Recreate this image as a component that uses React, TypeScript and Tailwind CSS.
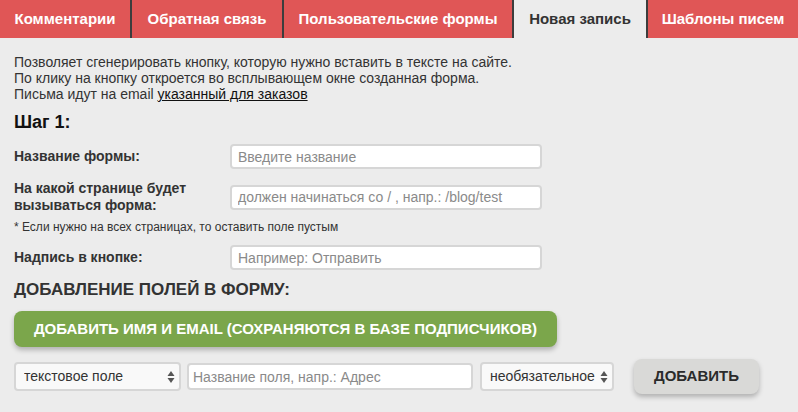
import React, { useState } from 'react';

const tabs = [
  { label: 'Комментарии', width: 'w-[130px]' },
  { label: 'Обратная связь', width: 'w-[152px]' },
  { label: 'Пользовательские формы', width: 'w-[230px]' },
  { label: 'Новая запись', width: 'w-[134px]' },
  { label: 'Шаблоны писем', width: 'flex-1' },
];

function SelectArrows() {
  return (
    <svg width="8" height="13" viewBox="0 0 8 13" className="pointer-events-none absolute right-[6px] top-1/2 -translate-y-1/2">
      <path d="M4 0.5 L7.5 5.5 L0.5 5.5 Z" fill="#555" />
      <path d="M4 12.5 L7.5 7.5 L0.5 7.5 Z" fill="#555" />
    </svg>
  );
}

function FieldRow({ label, placeholder }: { label: React.ReactNode; placeholder: string }) {
  return (
    <div className="flex items-center">
      <label className="w-[216px] text-[14px] font-bold leading-[17px] text-[#333]">{label}</label>
      <input
        placeholder={placeholder}
        className="w-[312px] h-[25px] px-[6px] bg-white border-2 border-[#d6d6d6] rounded-[4px] text-[14px] text-[#333] placeholder:text-[#8a8a8a] outline-none"
      />
    </div>
  );
}

export default function App() {
  const [active, setActive] = useState(3);
  const [fieldType, setFieldType] = useState('text');
  const [required, setRequired] = useState('optional');

  return (
    <div className="w-[798px] h-[412px] bg-[#ececec] overflow-hidden" style={{ fontFamily: '"Liberation Sans", Arial, sans-serif' }}>
      {/* Tabs */}
      <div className="flex h-[38px]">
        {tabs.map((t, i) => (
          <button
            key={t.label}
            onClick={() => setActive(i)}
            className={`${t.width} h-full flex items-center justify-center text-[15px] font-bold ${
              i > 0 ? 'border-l-2 border-[#3d3d3d]' : ''
            } ${active === i ? 'bg-[#ececec] text-[#333]' : 'bg-[#e05656] text-white'}`}
          >
            {t.label}
          </button>
        ))}
      </div>

      <div className="pl-[14px] pt-[16px]">
        {/* Intro */}
        <p className="text-[14px] leading-[16px] text-[#333]">
          Позволяет сгенерировать кнопку, которую нужно вставить в тексте на сайте.
          <br />
          По клику на кнопку откроется во всплывающем окне созданная форма.
          <br />
          Письма идут на email <a href="#" className="underline text-[#111]">указанный для заказов</a>
        </p>

        <h2 className="mt-[10px] text-[18px] font-bold leading-[20px] text-[#111]">Шаг 1:</h2>

        <div className="mt-[12px] flex flex-col">
          <FieldRow label="Название формы:" placeholder="Введите название" />
          <div className="mt-[11px]">
            <FieldRow
              label={
                <>
                  На какой странице будет
                  <br />
                  вызываться форма:
                </>
              }
              placeholder="должен начинаться со / , напр.: /blog/test"
            />
          </div>
          <p className="mt-[6px] text-[12px] leading-[14px] text-[#333]">* Если нужно на всех страницах, то оставить поле пустым</p>
          <div className="mt-[11px]">
            <FieldRow label="Надпись в кнопке:" placeholder="Например: Отправить" />
          </div>
        </div>

        <h3 className="mt-[11px] text-[17px] font-bold leading-[18px] text-[#333]">ДОБАВЛЕНИЕ ПОЛЕЙ В ФОРМУ:</h3>

        <button className="mt-[12px] w-[543px] h-[36px] rounded-[8px] bg-[#7ba64b] text-white text-[15px] font-bold shadow-[0_3px_5px_rgba(0,0,0,0.25)]">
          ДОБАВИТЬ ИМЯ И EMAIL (СОХРАНЯЮТСЯ В БАЗЕ ПОДПИСЧИКОВ)
        </button>

        {/* Field row */}
        <div className="mt-[12px] flex items-center">
          <div className="relative w-[167px] h-[29px]">
            <select
              value={fieldType}
              onChange={(e) => setFieldType(e.target.value)}
              className="appearance-none w-full h-full pl-[8px] pr-[18px] bg-[#f9f9f9] border-2 border-[#d6d6d6] rounded-[4px] text-[14px] text-[#333] outline-none"
            >
              <option value="text">текстовое поле</option>
              <option value="textarea">многострочное поле</option>
              <option value="checkbox">флажок</option>
            </select>
            <SelectArrows />
          </div>
          <input
            placeholder="Название поля, напр.: Адрес"
            className="ml-[6px] w-[286px] h-[27px] px-[4px] bg-white border-2 border-[#d6d6d6] rounded-[4px] text-[14px] text-[#333] placeholder:text-[#8a8a8a] outline-none"
          />
          <div className="relative ml-[7px] w-[134px] h-[29px]">
            <select
              value={required}
              onChange={(e) => setRequired(e.target.value)}
              className="appearance-none w-full h-full pl-[8px] pr-[16px] bg-[#f9f9f9] border-2 border-[#d6d6d6] rounded-[4px] text-[14px] text-[#333] outline-none"
            >
              <option value="optional">необязательное</option>
              <option value="required">обязательное</option>
            </select>
            <SelectArrows />
          </div>
          <button className="ml-[20px] w-[125px] h-[35px] rounded-[8px] bg-[#d9d9d7] text-[#2b2b2b] text-[15px] font-bold shadow-[0_3px_5px_rgba(0,0,0,0.25)]">
            ДОБАВИТЬ
          </button>
        </div>
      </div>
    </div>
  );
}
